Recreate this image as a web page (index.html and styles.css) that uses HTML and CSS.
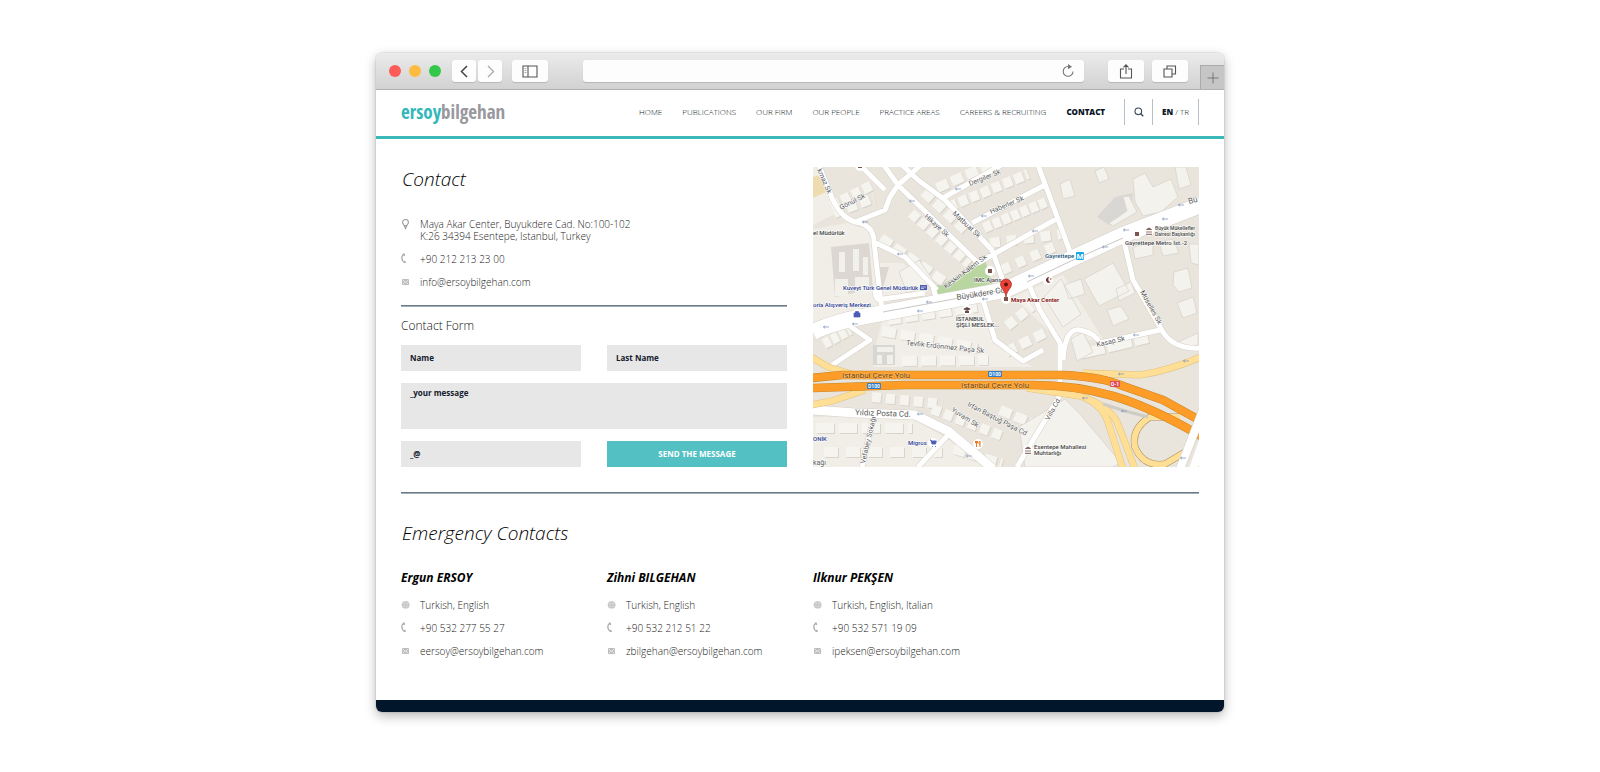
FILE: index.html
```html
<!DOCTYPE html>
<html lang="en">
<head>
<meta charset="utf-8">
<title>Contact - ersoybilgehan</title>
<link rel="stylesheet" href="styles.css">
</head>
<body>
<svg class="defs" aria-hidden="true">
  <symbol id="i-pin" viewBox="0 0 9 12"><path d="M3.2 7.6 4.5 10.6 5.800 7.600M4.500 1.500a2.900 2.900 0 0 1 2.900 2.900C7.400 6 6 6.600 5.800 7.600H3.200C3 6.600 1.600 6 1.600 4.400A2.900 2.900 0 0 1 4.500 1.500z" fill="none" stroke="#999" stroke-width="1.100"/></symbol>
  <symbol id="i-phone" viewBox="0 0 9 12"><path d="M3 1C-.2 2.800.2 7.900 3.700 9.700" fill="none" stroke="#aaa" stroke-width="1.300"/><path d="M2 .7 3.400.3l.8 2.400-1.500.6zM3.400 7.700l1.600.9-.7 1.700-1.700-.7z" fill="#aaa"/></symbol>
  <symbol id="i-mail" viewBox="0 0 9 12"><path d="M1 3h7v6H1z" fill="#bdbdbd"/><path d="M1.500 3.800 4.500 6.500l3-2.700M2 8.200l1.600-1.700M7 8.200 5.400 6.500" fill="none" stroke="#fff" stroke-width=".7"/></symbol>
  <symbol id="i-globe" viewBox="0 0 9 12"><rect x=".7" y="2.200" width="7.800" height="7.400" rx="3.500" fill="#c4c4c4"/><path d="M1 4.500h7M1 7.300h7M3 2.500v7M6 2.500v7" stroke="#e0e0e0" stroke-width=".5"/></symbol>
  <symbol id="i-arrow" viewBox="0 0 8 4"><path d="M8 2H2M3.500.5 1.500 2l2 1.500" fill="none" stroke="#8596bd" stroke-width=".9"/></symbol>
</svg>
<div class="window">
  <div class="toolbar">
    <div class="lights"><span class="light red"></span><span class="light amber"></span><span class="light green"></span></div>
    <div class="history">
      <button class="tool small" aria-label="Back"><svg width="22" height="20" viewBox="0 0 22 20"><path d="M14 5 8.500 10.500 14 16" fill="none" stroke="#444" stroke-width="1.500"/></svg></button>
      <button class="tool small" aria-label="Forward"><svg width="22" height="20" viewBox="0 0 22 20"><path d="M9 5l5.500 5.500L9 16" fill="none" stroke="#aaa" stroke-width="1.300"/></svg></button>
    </div>
    <button class="tool" aria-label="Sidebar"><svg width="16" height="13" viewBox="0 0 16 13"><path d="M1 1h14v11H1zM6 1v11" fill="none" stroke="#555" stroke-width="1.100"/><path d="M2.500 3.500h2M2.500 5.500h2M2.500 7.500h2" stroke="#999" stroke-width=".8"/></svg></button>
    <div class="address"><input type="text" aria-label="Address"><button class="reload" aria-label="Reload"><svg width="14" height="14" viewBox="0 0 14 14"><path d="M7 2.500A4.900 4.900 0 1 0 12 7.500" fill="none" stroke="#777" stroke-width="1.100"/><path d="M7 0l4 2.700-4 2.500z" fill="#777"/></svg></button></div>
    <div class="actions">
      <button class="tool" aria-label="Share"><svg width="14" height="17" viewBox="0 0 14 17"><path d="M5 6H1.500v9h11V6H9M7 11V2M4.500 4.300 7 1.800l2.500 2.500" fill="none" stroke="#555" stroke-width="1.100"/></svg></button>
      <button class="tool" aria-label="Tabs"><svg width="14" height="14" viewBox="0 0 14 14"><path d="M1 5h8v8H1zM4 5V2h8.500v8H9" fill="none" stroke="#555" stroke-width="1.100"/></svg></button>
    </div>
    <button class="new-tab" aria-label="New tab"><svg width="12" height="12" viewBox="0 0 12 12"><path d="M6 .5v11M.5 6h11" stroke="#777" stroke-width="1"/></svg></button>
  </div>

  <header class="header">
    <a class="logo" href="#"><span class="logo-first">ersoy</span>bilgehan</a>
    <nav class="nav">
      <a href="#">HOME</a><a href="#">PUBLICATIONS</a><a href="#">OUR FIRM</a><a href="#">OUR PEOPLE</a><a href="#">PRACTICE AREAS</a><a href="#">CAREERS &amp; RECRUITING</a><a class="current" href="#">CONTACT</a>
    </nav>
    <div class="extras">
      <button class="search" aria-label="Search"><svg width="10" height="10" viewBox="0 0 10 10"><circle cx="4.300" cy="4.300" r="3.300" fill="none" stroke="#34465a" stroke-width="1.100"/><path d="M6.700 6.700 9.300 9.300" stroke="#34465a" stroke-width="1.300"/></svg></button>
      <div class="language"><a class="current" href="#">EN</a> / <a href="#">TR</a></div>
    </div>
  </header>

  <main class="content">
    <div class="top">
      <section>
        <h1 class="title">Contact</h1>
        <ul class="details">
          <li><svg class="icon"><use href="#i-pin"/></svg><span>Maya Akar Center, Buyukdere Cad. No:100-102<br>K:26 34394 Esentepe, Istanbul, Turkey</span></li>
          <li><svg class="icon"><use href="#i-phone"/></svg><span>+90 212 213 23 00</span></li>
          <li><svg class="icon"><use href="#i-mail"/></svg><a href="#">info@ersoybilgehan.com</a></li>
        </ul>
        <hr class="rule form-rule">
        <h2 class="subtitle">Contact Form</h2>
        <form class="form">
          <input type="text" aria-label="Name" placeholder="Name">
          <input type="text" aria-label="Last Name" placeholder="Last Name">
          <textarea aria-label="Your message" placeholder="_your message"></textarea>
          <input type="email" aria-label="E-mail" placeholder="_@">
          <button type="button" class="send">SEND THE MESSAGE</button>
        </form>
      </section>

      <svg class="map" viewBox="0 0 386 300" role="img" aria-label="Map of Maya Akar Center">
        <rect width="386" height="300" fill="#e9e4dc"/>
        <path d="M0 62 34 56 58 64 62 98 66 140 0 158zM0 250H96L132 270 170 300H0zM60 190 70 150 172 134 180 176 220 200 60 200zM0 0H8L26 45 0 58zM66 96 90 96 116 124 70 136zM200 130 250 108 290 172 250 176 232 160z" fill="#f0eee7"/>
        <path d="M0 10 8 8 13 25 0 31z" fill="#eddcb0"/>
        <path d="M18 80 56 76 60 122 22 130zM62 100h14l-10 35z" fill="#dcd8d1"/>
        <path d="M284 50 302 30 320 26 318 46 296 58zM60 178h22v20H60z" fill="#d9d7d3"/>
        <path d="M26 85h6v20h-6zM40 82h6v22h-6zM50 90h5v18h-5zM22 112h13v17H22zM42 110h14v17H42zM64 180h16v5H64zM64 188h5v9H64zM74 188h6v9H74z" fill="#f1f0eb"/>
        <path d="M117 121Q145 112 172 93L180 118 120 128z" fill="#b9d6a0"/>

        <g fill="none" stroke-width="10">
          <g stroke="#d8d4cb">
            <path d="M99 47 157 98" stroke-dasharray="9 3"/><path d="M69 72 134 117" stroke-dasharray="12 4"/><path d="M112 26 155 66" stroke-dasharray="11 4"/><path d="M136 41 216 8" stroke-dasharray="9 3"/><path d="M172 62 234 36" stroke-dasharray="8 2"/><path d="M125 22 186-5" stroke-dasharray="12 4"/><path d="M178 77 250 68" stroke-dasharray="10 7"/><path d="M19 40 62 18" stroke-dasharray="9 3"/><path d="M190 104 248 78" stroke-dasharray="9 7"/><path d="M12 178 38 164" stroke-dasharray="7 2"/>
            <path d="M60 231 130 238" stroke-dasharray="9 5"/><path d="M120 243 190 270" stroke-dasharray="9 4"/><path d="M4 262H100" stroke-dasharray="18 5"/><path d="M12 286H130" stroke-dasharray="14 8"/><path d="M70 165 165 182" stroke-dasharray="14 5"/><path d="M194 186 236 165" stroke-dasharray="11 5"/><path d="M188 244 232 262" stroke-dasharray="12 4"/><path d="M268 188 336 172" stroke-dasharray="25 3"/>
            <path d="M76 154 165 141" stroke-dasharray="13 4"/><path d="M90 195 176 194" stroke-dasharray="15 4"/><path d="M142 283 190 298" stroke-dasharray="12 4"/><path d="M22 47 62 32" stroke-dasharray="10 4"/><path d="M195 160 220 140" stroke-dasharray="10 4"/>
          </g>
          <g stroke="#f5f4ef">
            <path d="M98 46 156 97" stroke-dasharray="9 3"/><path d="M68 71 133 116" stroke-dasharray="12 4"/><path d="M111 25 154 65" stroke-dasharray="11 4"/><path d="M135 40 215 7" stroke-dasharray="9 3"/><path d="M171 61 233 35" stroke-dasharray="8 2"/><path d="M124 21 185-6" stroke-dasharray="12 4"/><path d="M177 76 249 67" stroke-dasharray="10 7"/><path d="M18 39 61 17" stroke-dasharray="9 3"/><path d="M189 103 247 77" stroke-dasharray="9 7"/><path d="M11 177 37 163" stroke-dasharray="7 2"/>
            <path d="M59 230 129 237" stroke-dasharray="9 5"/><path d="M119 242 189 269" stroke-dasharray="9 4"/><path d="M3 261H99" stroke-dasharray="18 5"/><path d="M11 285H129" stroke-dasharray="14 8"/><path d="M69 164 164 181" stroke-dasharray="14 5"/><path d="M193 185 235 164" stroke-dasharray="11 5"/><path d="M187 243 231 261" stroke-dasharray="12 4"/><path d="M267 187 335 171" stroke-dasharray="25 3"/>
            <path d="M75 153 164 140" stroke-dasharray="13 4"/><path d="M89 194 175 193" stroke-dasharray="15 4"/><path d="M141 282 189 297" stroke-dasharray="12 4"/><path d="M21 46 61 31" stroke-dasharray="10 4"/><path d="M194 159 219 139" stroke-dasharray="10 4"/>
          </g>
        </g>
        <g fill="#f3f2ed" stroke="#d8d4cb" stroke-width=".8">
          <path d="M247 17 257 12 262 29 250 32zM282 4 291 0 296 12 286 16zM296 56 314 44 310 30 316 29 324 45 300 59zM320 12 332 6 340 20 358 12 365 30 348 45 330 49 322 35zM362 0H373L378 18 366 22zM271 112 300 96 316 124 286 139zM251 118 268 112 272 127 256 132zM303 122 318 115 322 126 306 134zM231 130 248 112 268 147 250 160zM320 80 340 76 340 88 322 92zM346 75 360 72 366 86 350 89zM376 77H386V98L378 96zM361 105 375 101 379 121 366 125 360 118zM364 136 380 130 384 146 370 151zM294 143 308 139 316 152 300 159zM258 172 270 165 280 185 264 194zM365 175 385 166V178L370 181zM206 260 252 232 266 246 308 296 300 300H212zM86 105 106 93 122 116 94 126z"/>
        </g>
        <path d="M330 254Q350 248 366 256L376 276 354 294Q328 296 326 274z" fill="#e9e4dc"/>

        <g fill="none" stroke-linejoin="round">
          <g stroke="#d5d1c9">
            <path d="M5-4 17 26Q26 50 42 55L72 43 77 30 85 18 109-3M47-2 72 23M42 55Q61 58 61 75L92 90 124 123M88-3 105 13 132 33 179 83 193 122M70-3 85 18 165 96M130 31 192-4M159 56 232 18M225-2 259 90M165 96 245 51M61 75Q66 120 69 143M62 122Q62 136 70 132L112 126M120 120 124 134M217 120 227 143 247 176V228L204 300M310 70 320 113 347 160Q358 183 388 181M287 176 347 163M250 193Q252 160 267 163T287 176M170 133 182 173 210 194 230 183M35 158 57 173 19 198M60 253 49 300M135 268 105 300" stroke-width="6"/>
            <path d="M0 243 42 246 102 248 135 264 180 302" stroke-width="10"/>
            <path d="M0 165Q20 155 59 148L192 123 260 91 310 68 388 38" stroke-width="17"/>
          </g>
          <g stroke="#fff">
            <path d="M5-4 17 26Q26 50 42 55L72 43 77 30 85 18 109-3M47-2 72 23M42 55Q61 58 61 75L92 90 124 123M88-3 105 13 132 33 179 83 193 122M70-3 85 18 165 96M130 31 192-4M159 56 232 18M225-2 259 90M165 96 245 51M61 75Q66 120 69 143M62 122Q62 136 70 132L112 126M120 120 124 134M217 120 227 143 247 176V228L204 300M310 70 320 113 347 160Q358 183 388 181M287 176 347 163M250 193Q252 160 267 163T287 176M170 133 182 173 210 194 230 183M35 158 57 173 19 198M60 253 49 300M135 268 105 300" stroke-width="5"/>
            <path d="M0 243 42 246 102 248 135 264 180 302" stroke-width="9"/>
            <path d="M0 165Q20 155 59 148L192 123 260 91 310 68 388 38" stroke-width="16"/>
          </g>
          <path d="M70 145 190 123M214 115 260 93 310 71" stroke="#b9b7b4" stroke-width=".8"/>
          <g stroke="#e0c27e" stroke-width="7">
            <path d="M-2 190 15 200 38 207M-2 238 19 234 52 223M270 206 327 208Q355 204 388 190M214 221 267 229Q288 236 295 255L310 302M267 229Q300 240 306 260L322 302"/>
            <path d="M367 250H337Q318 262 322 280 330 300 352 297L374 284" stroke="#a8905c"/>
          </g>
          <path d="M-2 190 15 200 38 207M-2 238 19 234 52 223M270 206 327 208Q355 204 388 190M214 221 267 229Q288 236 295 255L310 302M267 229Q300 240 306 260L322 302M367 250H337Q318 262 322 280 330 300 352 297L374 284" stroke="#ffdf96" stroke-width="6"/>
          <path d="M290 237 312 244 335 250" stroke="#cfccc6" stroke-width="3"/>
          <path d="M-2 211 29 208H192L250 208Q290 210 310 219L350 233 388 254M-2 221 92 218H220Q262 218 300 229T388 269" stroke="#c78628" stroke-width="8.600"/>
          <path d="M-2 211 29 208H192L250 208Q290 210 310 219L350 233 388 254M-2 221 92 218H220Q262 218 300 229T388 269" stroke="#fd9d27" stroke-width="7.600"/>
          <path d="M390 243 367 302" stroke="#d5d1c9" stroke-width="9"/><path d="M390 243 367 302M390 274 380 302" stroke="#fff" stroke-width="8"/>
        </g>

        <g>
          <use href="#i-arrow" x="48" y="53" width="7" height="4"/><use href="#i-arrow" x="95" y="32" width="7" height="4"/><use href="#i-arrow" x="83" y="85" width="7" height="4"/><use href="#i-arrow" x="141" y="20" width="7" height="4"/><use href="#i-arrow" x="167" y="47" width="7" height="4"/><use href="#i-arrow" x="112" y="133" width="7" height="4"/><use href="#i-arrow" x="168" y="130" width="7" height="4"/><use href="#i-arrow" x="103" y="142" width="7" height="4"/><use href="#i-arrow" x="218" y="62" width="7" height="4"/><use href="#i-arrow" x="214" y="107" width="7" height="4"/><use href="#i-arrow" x="309" y="61" width="7" height="4"/><use href="#i-arrow" x="288" y="78" width="7" height="4"/><use href="#i-arrow" x="348" y="50" width="7" height="4"/><use href="#i-arrow" x="364" y="36" width="7" height="4"/><use href="#i-arrow" x="9" y="158" width="7" height="4"/><use href="#i-arrow" x="38" y="155" width="7" height="4"/><use href="#i-arrow" x="319" y="166" width="7" height="4"/><use href="#i-arrow" x="304" y="205" width="7" height="4"/><use href="#i-arrow" x="369" y="192" width="7" height="4"/><use href="#i-arrow" x="268" y="229" width="7" height="4"/><use href="#i-arrow" x="307" y="242" width="7" height="4"/><use href="#i-arrow" x="103" y="245" width="7" height="4"/><use href="#i-arrow" x="152" y="287" width="7" height="4"/><use href="#i-arrow" x="366" y="289" width="7" height="4"/>
        </g>

        <g class="street">
          <text transform="translate(4 3) rotate(66)">kmaz Sk</text>
          <text transform="translate(28 43) rotate(-27)">Gönül Sk</text>
          <text transform="translate(111 50) rotate(42)">Hikaye Sk</text>
          <text transform="translate(139 47) rotate(43)">Matbuat Sk</text>
          <text transform="translate(157 19) rotate(-22)">Dergiler Sk</text>
          <text transform="translate(178 47) rotate(-23)">Haberler Sk</text>
          <text transform="translate(133 122) rotate(-37)">Keskin Kalem Sk</text>
          <text transform="translate(327 125) rotate(61)">Müselles Sk</text>
          <text transform="translate(93 178) rotate(6)">Tevfik Erdönmez Paşa Sk</text>
          <text transform="translate(284 180) rotate(-13)">Kasap Sk</text>
          <text transform="translate(138 244) rotate(33)">Yuvam Sk</text>
          <text transform="translate(154 239) rotate(27)">Irfan Baştuğ Paşa Cd</text>
          <text transform="translate(236 254) rotate(-61)">Villa Cd</text>
          <text transform="translate(52 297) rotate(-77)">Vefabey Sokağı</text>
          <text x="0" y="298">kağı</text>
        </g>
        <g class="street large">
          <text transform="translate(144 133) rotate(-9)">Büyükdere Cd.</text>
          <text transform="translate(376 37) rotate(-15)">Bü</text>
          <text transform="translate(42 248) rotate(2)">Yıldız Posta Cd.</text>
        </g>
        <g class="highway"><text x="29" y="211">İstanbul Çevre Yolu</text><text x="148" y="221">İstanbul Çevre Yolu</text></g>
        <rect x="175" y="204" width="14" height="6" rx="1" fill="#2f7bc7"/><rect x="54" y="216" width="14" height="6" rx="1" fill="#2f7bc7"/><rect x="297" y="214" width="10" height="6" rx="1" fill="#de4b5b"/>
        <g class="shield"><text x="182" y="209">D100</text><text x="61" y="221">D100</text><text x="302" y="219">O-1</text></g>

        <g fill="#fff"><circle cx="177" cy="104" r="5"/><circle cx="235" cy="113" r="5"/><circle cx="324" cy="67" r="5"/><circle cx="336" cy="64" r="5"/><circle cx="44" cy="147" r="5"/><circle cx="154" cy="143" r="5"/><circle cx="120" cy="276" r="5"/><circle cx="165" cy="277" r="5"/><circle cx="215" cy="283" r="5"/><circle cx="47" cy="-1" r="5"/><circle cx="193" cy="132" r="5"/></g>
        <path d="M175 102h4v4h-4zM322 65h4v4h-4zM45 0h4v1h-4zM191 130h4v4h-4z" fill="#7b5550"/>
        <path d="M333.500 62.500l2.500-1.500 2.500 1.500zM334 64v2.500M336 64v2.500M338 64v2.500M333 67.500h6M212.500 281.500l2.500-1.500 2.500 1.500zM213 283v2.500M215 283v2.500M217 283v2.500M212 286.500h6" fill="#7b5550" stroke="#7b5550" stroke-width=".8"/>
        <path d="M150 142l4-2 4 2-4 2zM152 144v2h4v-2" fill="#6b4c48"/>
        <path d="M236.500 110.500a2.700 2.700 0 1 0 1 4.500 2.400 2.400 0 0 1-1-4.500z" fill="#72302f"/><circle cx="237.800" cy="112" r=".7" fill="#72302f"/>
        <path d="M41 146h6v4h-6zM42.500 146v-1.500h3v1.500" fill="#4c5db6" stroke="#4c5db6" stroke-width=".7"/>
        <path d="M107 118h7v5h-7z" fill="#4c5db6"/><path d="M108 120h5M108 121.500h3" stroke="#fff" stroke-width=".6"/>
        <path d="M117 273h1l1 4h3.500l.8-3H118M119 279.500h.8M122 279.500h.8" fill="#4c5db6" stroke="#4c5db6" stroke-width=".9"/>
        <path d="M163.500 274v6M162.500 274v2h2v-2M167 280v-6q-1.500 1-1 3h1" fill="none" stroke="#ef7623" stroke-width="1"/>
        <rect x="263" y="85" width="8" height="8" rx="1" fill="#1aa5e8"/>
        <g class="poi">
          <text class="navy" x="30" y="123">Kuveyt Türk Genel Müdürlük</text>
          <text class="navy" x="0" y="140">oria Alışveriş Merkezi</text>
          <text x="0" y="68">el Müdürlük</text>
          <text x="161" y="115">IMC Ajans</text>
          <text x="143" y="154">İSTANBUL</text><text x="143" y="160">ŞİŞLİ MESLEK...</text>
          <text class="minor" x="342" y="63">Büyük Mükellefler</text><text class="minor" x="342" y="69">Dairesi Başkanlığı</text>
          <text x="312" y="78">Gayrettepe Metro İst.-2</text>
          <text class="metro" x="232" y="91">Gayrettepe</text>
          <text class="navy" x="0" y="274">ONİK</text>
          <text class="navy" x="95" y="278">Migros</text>
          <text x="221" y="282">Esentepe Mahallesi</text><text x="221" y="288">Muhtarlığı</text>
          <text class="place" x="198" y="135">Maya Akar Center</text>
        </g>
        <text class="m-sign" x="267" y="92">M</text>
        <path d="M193 130C192 123 187.500 121 187.500 117.500a5.500 5.500 0 0 1 11 0C198.500 121 194 123 193 130z" fill="#ea4335" stroke="#9c2a22" stroke-width=".7"/><circle cx="193" cy="117.500" r="1.900" fill="#5c130f"/>
      </svg>
    </div>

    <hr class="rule section-rule">
    <h2 class="title">Emergency Contacts</h2>
    <div class="people">
      <section>
        <h3 class="person">Ergun ERSOY</h3>
        <ul class="details">
          <li><svg class="icon"><use href="#i-globe"/></svg><span>Turkish, English</span></li>
          <li><svg class="icon"><use href="#i-phone"/></svg><span>+90 532 277 55 27</span></li>
          <li><svg class="icon"><use href="#i-mail"/></svg><a href="#">eersoy@ersoybilgehan.com</a></li>
        </ul>
      </section>
      <section>
        <h3 class="person">Zihni BILGEHAN</h3>
        <ul class="details">
          <li><svg class="icon"><use href="#i-globe"/></svg><span>Turkish, English</span></li>
          <li><svg class="icon"><use href="#i-phone"/></svg><span>+90 532 212 51 22</span></li>
          <li><svg class="icon"><use href="#i-mail"/></svg><a href="#">zbilgehan@ersoybilgehan.com</a></li>
        </ul>
      </section>
      <section>
        <h3 class="person">Ilknur PEKŞEN</h3>
        <ul class="details">
          <li><svg class="icon"><use href="#i-globe"/></svg><span>Turkish, English, Italian</span></li>
          <li><svg class="icon"><use href="#i-phone"/></svg><span>+90 532 571 19 09</span></li>
          <li><svg class="icon"><use href="#i-mail"/></svg><a href="#">ipeksen@ersoybilgehan.com</a></li>
        </ul>
      </section>
    </div>
  </main>
  <footer class="footer"></footer>
</div>
</body>
</html>
```

FILE: styles.css
```css
* { box-sizing: border-box; }
body { margin: 0; padding: 53px 16px 60px; background: #fff; font-family: "Open Sans", "Noto Sans", sans-serif; font-size: 10px; line-height: 12px; color: #1c1c1c; }
a { color: inherit; text-decoration: none; }
button, input, textarea { font: inherit; border: 0; margin: 0; padding: 0; border-radius: 0; }
h1, h2, h3, ul { margin: 0; padding: 0; }
.defs { position: absolute; width: 0; height: 0; }

.window { max-width: 848px; margin: 0 auto; border-radius: 6px; overflow: hidden; background: #fff; box-shadow: 0 0 2px rgba(0, 0, 0, .25), 0 4px 12px rgba(0, 0, 0, .28); }

.toolbar { display: flex; align-items: center; height: 37px; padding-left: 13px; background: linear-gradient(#ebebeb, #d2d2d2); border-bottom: 1px solid #b0b0b0; }
.lights { display: flex; gap: 8px; margin-right: 11px; }
.light { width: 12px; height: 12px; border-radius: 50%; }
.red { background: #fc5b57; }
.amber { background: #fdbc40; }
.green { background: #34c84a; }
.history { display: flex; gap: 2px; margin-right: 10px; }
.actions { display: flex; gap: 8px; }
.tool { display: flex; align-items: center; justify-content: center; width: 36px; height: 22px; flex: none; border-radius: 3px; background: #fdfdfd; box-shadow: 0 1px 1px rgba(0, 0, 0, .15); }
.tool.small { width: 24px; }
.address { display: flex; align-items: center; flex: 1; height: 22px; margin: 0 24px 0 35px; padding-right: 9px; border-radius: 3px; background: #fdfdfd; box-shadow: 0 1px 1px rgba(0, 0, 0, .15); }
.address input { flex: 1; min-width: 0; height: 100%; background: none; }
.reload { display: flex; background: none; }
.new-tab { display: flex; align-items: center; justify-content: center; align-self: flex-end; width: 24px; height: 24px; margin-left: 12px; background: #c6c6c6; border: solid #ababab; border-width: 1px 0 0 1px; }

.header { display: flex; align-items: center; height: 49px; padding: 0 25px 2px; border-bottom: 3px solid #3bb8b8; font-size: 8px; font-weight: 300; color: #0c1824; }
.logo { font-family: "Open Sans Condensed", Lato, sans-serif; font-size: 19px; line-height: 26px; font-weight: 300; color: #98989d; }
.logo-first { color: #33b7ba; }
.nav { display: flex; gap: 20px; margin-left: auto; white-space: nowrap; }
.current { font-weight: 800; color: #061425; }
.extras { display: flex; height: 26px; margin-left: 19px; border: solid #b6bfca; border-width: 0 1px; }
.search { display: flex; align-items: center; justify-content: center; width: 28px; background: none; border-right: 1px solid #b6bfca; }
.language { padding: 0 9px; line-height: 26px; white-space: nowrap; }

.content { padding: 28px 25px 43px; }
.top, .people { display: grid; gap: 26px; }
.top { grid-template-columns: 1fr 1fr; }
.people { grid-template-columns: repeat(4, 1fr); margin-top: 25px; }
.title { padding-left: 1px; font-size: 19px; line-height: 24px; font-weight: 300; font-style: italic; color: #000; }
.details { list-style: none; display: grid; gap: 11px; margin-top: 27px; font-weight: 300; white-space: nowrap; }
.details li { display: flex; gap: 10px; }
.icon { width: 9px; height: 12px; flex: none; }
.rule { height: 2px; margin: 0; border: 0; border-top: 1px solid #6b7a88; background: #a3adb6; }
.form-rule { margin-top: 17px; }
.subtitle { margin: 11px 0; font-size: 12px; line-height: 16px; font-weight: 300; color: #111; }
.form { display: grid; grid-template-columns: 1fr 1fr; gap: 12px 26px; font-size: 8px; font-weight: 700; }
.form input, .form textarea { width: 100%; height: 26px; padding: 0 9px 2px; background: #e7e7e7; color: #14202e; }
.form textarea { grid-column: 1 / -1; display: block; height: 46px; padding-top: 4px; line-height: 12px; resize: none; }
.form ::placeholder { color: #14202e; opacity: 1; }
.send { height: 26px; background: #53c1c3; color: #fff; }
.map { display: block; width: 100%; height: auto; }
.section-rule { margin: 25px 0 27px; }
.person { font-size: 12px; line-height: 16px; font-weight: 700; font-style: italic; color: #000; }
.person + .details { margin-top: 13px; }
.footer { height: 12px; background: #02162b; }

.map text { font-family: Roboto, sans-serif; }
.street { font-size: 7px; fill: #5a5a5a; stroke: #fff; stroke-width: 1px; paint-order: stroke; }
.large { font-size: 8px; }
.highway { font-size: 8px; fill: #6b3d0c; stroke: #ffc069; stroke-width: 1px; paint-order: stroke; }
.shield { font-size: 5px; font-weight: 700; fill: #fff; text-anchor: middle; }
.poi { font-size: 6px; font-weight: 500; fill: #444; stroke: #fff; stroke-width: 1px; paint-order: stroke; }
.minor { font-size: 5px; }
.navy { fill: #2c3b8f; }
.metro { fill: #1c5578; }
.place { font-weight: 700; fill: #8b1a22; }
.m-sign { font-size: 8px; font-weight: 700; fill: #fff; text-anchor: middle; }
```
